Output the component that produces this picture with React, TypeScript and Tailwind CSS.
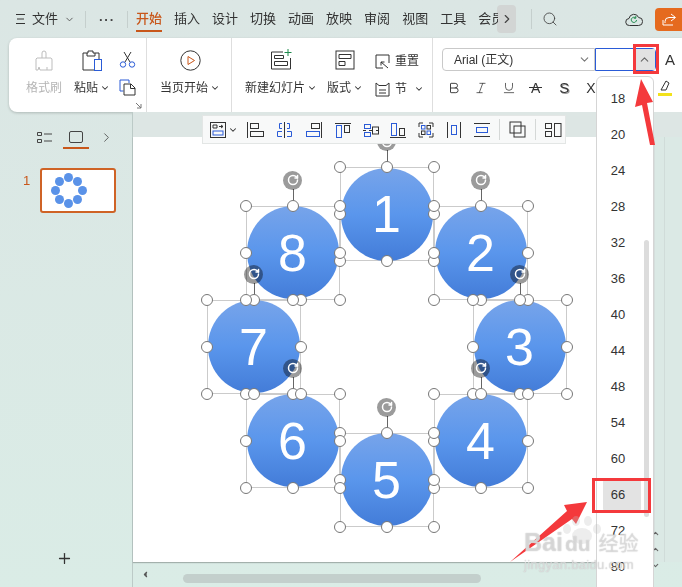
import React from 'react';
import { Bold, ChevronDown, ChevronLeft, ChevronRight, ChevronUp, Italic, Plus, RotateCw, Search, Underline } from 'lucide-react';

const cjk = "font-['Liberation_Sans','Noto_Sans_CJK_SC',sans-serif]";
const TABS = ['开始', '插入', '设计', '切换', '动画', '放映', '审阅', '视图', '工具', '会员'];
const SIZES = [18, 20, 24, 28, 32, 36, 40, 44, 48, 54, 60, 66, 72, 80];

// centres in page coordinates
const NODES = [
  { n: 1, x: 386.5, y: 214 },
  { n: 2, x: 480.5, y: 252.5 },
  { n: 3, x: 519.5, y: 346.5 },
  { n: 4, x: 480.5, y: 440.5 },
  { n: 5, x: 386.5, y: 479.5 },
  { n: 6, x: 292.5, y: 440.5 },
  { n: 7, x: 253.5, y: 346.5 },
  { n: 8, x: 292.5, y: 252.5 },
];
const CANVAS_X = 133;
const CANVAS_Y = 137;
const R = 47;

const THUMB = [
  [26, 7], [35, 11], [40, 20], [35, 29], [26, 33], [17, 29], [13, 20], [17, 11],
];

const Ico: React.FC<{ w?: number; h?: number; children: React.ReactNode; className?: string }> = ({ w = 16, h = 16, children, className }) => (
  <svg width={w} height={h} viewBox={`0 0 ${w} ${h}`} fill="none" stroke="#333" strokeWidth="1" className={className}>
    {children}
  </svg>
);

const BLUE = '#2a5bd7';

const ALIGN_ICONS: React.ReactNode[] = [
  <><path d="M1.5 0v16" /><rect x="4.5" y="1.5" width="8" height="5" /><rect x="4.5" y="9.5" width="13" height="5" /></>,
  <><path d="M8.5 0v16" /><path d="M6 1.5H3.5v5H6M11 1.5h2.5v5H11" stroke={BLUE} /><path d="M6 9.5H1.5v5H6M11 9.5h4.5v5H11" stroke={BLUE} /></>,
  <><path d="M16.5 0v16" /><rect x="6.5" y="1.5" width="8" height="5" /><rect x="1.5" y="9.5" width="13" height="5" stroke={BLUE} /></>,
  <><path d="M0 1.5h16" /><rect x="1.5" y="3.5" width="5" height="12" stroke={BLUE} /><rect x="9.5" y="3.5" width="5" height="7" /></>,
  <><path d="M0 8.5h3M6 8.5h4M13 8.5h3" /><rect x="1.5" y="2.5" width="6" height="4" stroke={BLUE} /><rect x="1.5" y="10.5" width="6" height="4" stroke={BLUE} /><rect x="9.5" y="5" width="6" height="7" /></>,
  <><path d="M0 15.5h16" /><rect x="1.5" y="1.5" width="5" height="12" stroke={BLUE} /><rect x="9.5" y="6.5" width="5" height="7" /></>,
  <><path d="M1 1h4M11 1h4M1 15h4M11 15h4M1 1v4M15 1v4M1 11v4M15 11v4" /><rect x="3.5" y="3.5" width="3.5" height="3.5" stroke={BLUE} /><rect x="9" y="3.5" width="3.5" height="3.5" /><rect x="3.5" y="9" width="3.5" height="3.5" /><rect x="9" y="9" width="3.5" height="3.5" stroke={BLUE} /></>,
  <><path d="M1.5 0v16M14.5 0v16" /><rect x="5.5" y="3.5" width="5" height="9" stroke={BLUE} /></>,
  <><path d="M0 1.5h16M0 14.5h16" /><rect x="2.5" y="5.5" width="11" height="5" stroke={BLUE} /></>,
];

const Node: React.FC<{ n: number; x: number; y: number }> = ({ n, x, y }) => (
  <div
    className="absolute flex h-[94px] w-[94px] items-center justify-center border border-[#cbcbcb]"
    style={{ left: x - R - CANVAS_X, top: y - R - CANVAS_Y }}
  >
    <div className="flex h-[93px] w-[93px] items-center justify-center rounded-full bg-gradient-to-b from-[#77a4ea] via-[#5a96ec] to-[#437cd8] font-['Liberation_Sans',sans-serif] text-[52px] leading-none text-white">
      {n}
    </div>
  </div>
);

const Rotate: React.FC<{ x: number; y: number }> = ({ x, y }) => (
  <>
    <div className="absolute w-px bg-[#666]" style={{ left: x - CANVAS_X, top: y - 64 - CANVAS_Y, height: 17 }} />
    <div
      className="absolute h-[19px] w-[19px] rounded-full bg-[#9b9b9b] mix-blend-multiply"
      style={{ left: x - 9.5 - CANVAS_X, top: y - 72.5 - 9.5 - CANVAS_Y }}
    />
    <div
      className="absolute flex h-[19px] w-[19px] items-center justify-center"
      style={{ left: x - 9.5 - CANVAS_X, top: y - 72.5 - 9.5 - CANVAS_Y }}
    >
      <RotateCw size={12} color="#fff" strokeWidth={3} />
    </div>
  </>
);

const Handle: React.FC<{ x: number; y: number }> = ({ x, y }) => (
  <div
    className="absolute h-[12px] w-[12px] rounded-full border border-[#777] bg-white"
    style={{ left: x - 6 - CANVAS_X, top: y - 6 - CANVAS_Y }}
  />
);

const Handles: React.FC<{ x: number; y: number }> = ({ x, y }) => (
  <>
    {[-R, 0, R].flatMap((dx) =>
      [-R, 0, R].filter((dy) => dx !== 0 || dy !== 0).map((dy) => <Handle key={`${dx}${dy}`} x={x + dx} y={y + dy} />),
    )}
  </>
);

const Caret: React.FC = () => <ChevronDown size={10} strokeWidth={2.5} className="ml-[2px] text-[#333]" />;

const TopBar: React.FC = () => (
  <div className={`flex h-[38px] items-center ${cjk} text-[13px] text-[#333]`}>
    <svg width="9" height="10" viewBox="0 0 9 10" stroke="#333" className="ml-4"><path d="M0 .5h9M1 5h7M0 9.5h9" /></svg>
    <span className="ml-[7px]">文件</span>
    <ChevronDown size={11} strokeWidth={2} className="ml-[6px] text-[#555]" />
    <div className="ml-[10px] h-[17px] w-px bg-[#c5cfcd]" />
    <span className="ml-[13px] text-[13px] font-bold leading-none tracking-[1px] text-[#444]">···</span>
    <div className="ml-[12px] h-[17px] w-px bg-[#c5cfcd]" />
    <div className="ml-[8px] flex w-[362px] gap-3 overflow-hidden">
      {TABS.map((t, i) => (
        <div key={t} className={`relative flex h-[38px] shrink-0 items-center pt-0 ${i === 0 ? 'font-medium text-[#c8571b]' : ''}`}>
          {t}
          {i === 0 && <div className="absolute bottom-[6px] left-0 h-[2px] w-full bg-[#c8571b]" />}
        </div>
      ))}
    </div>
    <div className="ml-[-1px] flex h-[28px] w-[19px] items-center justify-center rounded bg-[#d2d5d4]">
      <ChevronRight size={14} className="text-[#444]" />
    </div>
    <div className="ml-[15px] h-[20px] w-px bg-[#c5cfcd]" />
    <Search size={16} strokeWidth={1.3} className="ml-[10px] text-[#444]" />
    <svg width="18" height="15" viewBox="0 0 18 15" fill="none" className="ml-[67px]">
      <path d="M4.5 13.5a3.5 3.5 0 0 1-.5-7 5 5 0 0 1 9.6-1 4 4 0 0 1 0 8z" stroke="#333" />
      <path d="M11.5 8a2.6 2.6 0 1 1-.8-2M10.8 4v2.2H8.8" stroke="#1e8a4c" />
    </svg>
    <div className="ml-[12px] flex h-[23px] flex-1 items-center gap-1 rounded-l bg-[#e56a1e] pl-[7px] text-white">
      <svg width="15" height="13" viewBox="0 0 15 13" fill="none" stroke="#fff" className="shrink-0"><path d="M9 1l4.5 3.5L9 8M13 4.5H7a4 4 0 0 0-4 4V10M1 7v5h10" /></svg>
    </div>
  </div>
);

const Ribbon: React.FC = () => (
  <div className={`ml-[9px] flex h-[74px] rounded-l-lg bg-white shadow-[0_1px_3px_rgba(0,0,0,0.2)] ${cjk} text-[12px] text-[#333]`}>
    {/* clipboard */}
    <div className="relative flex w-[138px] border-r border-[#dedede]">
      <div className="flex w-[52px] flex-col items-center pl-[18px] pt-[12px] text-[#b5b5b5]">
        <svg width="20" height="22" viewBox="0 0 20 22" fill="none" stroke="#bdbdbd">
          <path d="M8 8V3a2 2 0 0 1 4 0v5M3 8h14a2 2 0 0 1 1 2v10H6l-1-3-1 3H2V9z" />
          <path d="M13 20v-3" />
        </svg>
        <span className="mt-[7px] whitespace-nowrap">格式刷</span>
      </div>
      <div className="ml-[13px] flex flex-col items-center pt-[12px]">
        <svg width="22" height="22" viewBox="0 0 22 22" fill="none" stroke="#333">
          <path d="M14 20H2V3h5V1h5v2h6v6" /><path d="M6 3v3h8V3" /><rect x="13.5" y="9.5" width="7" height="11" stroke={BLUE} />
        </svg>
        <span className="mt-[7px] flex items-center whitespace-nowrap">粘贴<Caret /></span>
      </div>
      <div className="ml-[9px] flex flex-col gap-[11px] pt-[13px]">
        <svg width="17" height="17" viewBox="0 0 17 17" fill="none">
          <path d="M5 1l6 10M12 1L6 11" stroke="#333" />
          <circle cx="4" cy="13.5" r="2.7" stroke={BLUE} /><circle cx="13" cy="13.5" r="2.7" stroke={BLUE} />
        </svg>
        <svg width="17" height="17" viewBox="0 0 17 17" fill="none">
          <path d="M4.5 12H1V1h9v3" stroke={BLUE} /><path d="M5 5h7l4 4v7H5z" stroke="#333" /><path d="M11.5 5v4.5H16" stroke="#333" />
        </svg>
      </div>
      <svg width="7" height="7" viewBox="0 0 7 7" fill="none" stroke="#777" className="absolute bottom-[3px] right-[4px]"><path d="M1 1l5 5M6 2v4H2" /></svg>
    </div>
    {/* slideshow */}
    <div className="flex w-[85px] flex-col items-center border-r border-[#dedede] pl-[2px] pt-[12px]">
      <svg width="21" height="21" viewBox="0 0 21 21" fill="none">
        <circle cx="10.5" cy="10.5" r="9.7" stroke="#333" /><path d="M8 6.5l6.5 4-6.5 4z" stroke="#c8571b" />
      </svg>
      <span className="mt-[8px] flex items-center whitespace-nowrap">当页开始<Caret /></span>
    </div>
    {/* slides */}
    <div className="flex w-[201px] border-r border-[#dedede]">
      <div className="ml-[13px] flex flex-col items-center pt-[11px]">
        <svg width="22" height="21" viewBox="0 0 22 21" fill="none" stroke="#333">
          <path d="M20.5 9v11H1.5V3H13" /><path d="M4.5 6.5h9v3h-9zM4.5 12.5h13v4h-13z" /><path d="M18 0v7M14.5 3.5h7" stroke="#1e8a4c" />
        </svg>
        <span className="mt-[9px] flex items-center whitespace-nowrap">新建幻灯片<Caret /></span>
      </div>
      <div className="ml-[10px] flex flex-col items-center pt-[12px]">
        <svg width="20" height="20" viewBox="0 0 20 20" fill="none" stroke="#333">
          <rect x="1" y="1" width="18" height="18" /><path d="M4 4.5h12v4H4zM4 11.5h6v4H4z" />
        </svg>
        <span className="mt-[9px] flex items-center whitespace-nowrap">版式<Caret /></span>
      </div>
      <div className="ml-[12px] flex flex-col gap-[10px] pt-[14px]">
        <div className="flex items-center gap-[5px]">
          <svg width="15" height="15" viewBox="0 0 15 15" fill="none" stroke="#333"><path d="M8 14H1V1h13v8" /><path d="M6 8l7 6M6 8h3.5M6 8v3.5" /></svg>
          重置
        </div>
        <div className="flex items-center gap-[5px]">
          <svg width="15" height="15" viewBox="0 0 15 15" fill="none" stroke="#333"><path d="M1 1l3 2.5h7L14 1M1 1v13h13V1M4 8h7M4 11h7" /></svg>
          节<Caret />
        </div>
      </div>
    </div>
    {/* font */}
    <div className="flex-1 pl-[9px] pt-[10px]">
      <div className="flex h-[23px] items-stretch">
        <div className="flex w-[153px] items-center justify-between rounded-l border border-[#c9c9c9] pl-[11px] pr-[3px] text-[#333]">
          Arial (正文)
          <ChevronDown size={13} className="text-[#777]" />
        </div>
        <div className="flex w-[61px] justify-end rounded-r border border-[#2a5bd7]">
          <div className="flex w-[21px] items-center justify-center bg-[#e2e2e2]">
            <ChevronUp size={13} className="text-[#666]" />
          </div>
        </div>
        <span className="ml-[9px] text-[15px] leading-[23px]">A</span>
      </div>
      <div className="mt-[5px] flex h-[24px] items-center text-[14px]">
        <Bold size={14} strokeWidth={1.6} className="ml-[5px]" />
        <Italic size={14} strokeWidth={1.3} className="ml-[13px]" />
        <Underline size={14} strokeWidth={1.3} className="ml-[14px]" />
        <span className="relative ml-[15px] font-['Liberation_Sans',sans-serif] text-[14px]">A<span className="absolute left-[-2px] right-[-2px] top-[9px] h-px bg-[#333]" /></span>
        <span className="ml-[19px] font-['Liberation_Sans',sans-serif] text-[15px] [text-shadow:1px_1px_0_#999]">S</span>
        <span className="ml-[17px] font-['Liberation_Sans',sans-serif] text-[14px]">X</span>
        <svg width="14" height="16" viewBox="0 0 14 16" fill="none" stroke="#333" className="ml-[62px]"><path d="M3 10l5-9 3 2-3 7z" /><path d="M0 13h14v3H0z" fill="#f2e21b" stroke="none" /></svg>
      </div>
    </div>
  </div>
);

const FloatBar: React.FC = () => (
  <div className="absolute left-[69px] top-[-22px] z-20 flex h-[29px] w-[364px] items-center border border-[#e3e6e5] bg-[#f8f9f9] pl-[7px]">
    <svg width="16" height="16" viewBox="0 0 16 16" fill="none" stroke="#333">
      <rect x=".5" y=".5" width="15" height="15" /><path d="M3 3h4v3H3zM9 4.5h4M11 3l2 1.5L11 6" /><rect x="3" y="9" width="10" height="4" stroke={BLUE} />
    </svg>
    <Caret />
    <div className="ml-[8px] flex gap-[11.7px]">
      {ALIGN_ICONS.map((ic, i) => (
        <Ico key={i} w={i === 1 || i === 0 || i === 2 ? 18 : 16}>{ic}</Ico>
      ))}
    </div>
    <div className="ml-[9px] h-[21px] w-px bg-[#d5d8d7]" />
    <Ico w={17} h={17} className="ml-[9px]">
      <rect x="1" y="1" width="11" height="11" /><rect x="5" y="5" width="11" height="11" />
    </Ico>
    <div className="ml-[9px] h-[21px] w-px bg-[#d5d8d7]" />
    <Ico w={17} h={16} className="ml-[9px]">
      <rect x=".5" y="1.5" width="6" height="5" /><rect x=".5" y="9.5" width="6" height="5" /><rect x="9.5" y="1.5" width="6.5" height="13" />
    </Ico>
  </div>
);

const SizeMenu: React.FC = () => (
  <div className={`absolute left-[596px] top-[76px] z-30 h-[530px] w-[58px] rounded-t-md border border-[#d5d5d5] bg-white ${cjk} text-[13px] text-[#333]`}>
    <div className="flex flex-col pt-[4px]">
      {SIZES.map((s) => (
        <div key={s} className="ml-[6px] flex h-[36px] w-[38px] items-center justify-center">
          <div className={`flex h-[34px] w-full items-center justify-center rounded pr-[8px] ${s === 66 ? 'bg-[#e3e3e3]' : ''}`}>{s}</div>
        </div>
      ))}
    </div>
    <div className="absolute right-[4px] top-[163px] h-[277px] w-[5px] rounded-full bg-[#dcdcdc]" />
  </div>
);

const Annotations: React.FC = () => (
  <>
    <div className="absolute left-[633px] top-[44px] z-40 h-[30px] w-[26px] border-[3px] border-[#f4393c]" />
    <div className="absolute left-[592px] top-[478px] z-40 h-[35px] w-[59px] border-[3px] border-[#f4393c]" />
    <svg width="682" height="587" viewBox="0 0 682 587" className="pointer-events-none absolute left-0 top-0 z-40">
      <path d="M641 79L653 102L647 103L655 145L650 145L642 105L635 107z" fill="#f4393c" />
      <path d="M587 502L564 505L567 511L510 562L572 519L576 524z" fill="#f4393c" />
    </svg>
  </>
);

const Watermark: React.FC = () => (
  <div className="pointer-events-none absolute left-[524px] top-[530px] z-50 font-['Liberation_Sans','Noto_Sans_CJK_SC',sans-serif] text-white/50 [text-shadow:0_0_1px_#aaa]">
    <svg width="44" height="30" viewBox="0 0 44 30" className="absolute left-[36px] top-[-14px]" fill="#c4c4c4" opacity=".3">
      <ellipse cx="22" cy="20" rx="10" ry="8" /><ellipse cx="7" cy="13" rx="4" ry="5" /><ellipse cx="16" cy="5" rx="4" ry="5" /><ellipse cx="28" cy="5" rx="4" ry="5" /><ellipse cx="37" cy="13" rx="4" ry="5" />
    </svg>
    <div className="relative flex items-baseline whitespace-nowrap text-[25px] font-bold leading-[25px]">
      Bai<span className="ml-[2px] text-[21px]">du</span><span className="ml-[8px] text-[20px] font-normal">经验</span>
    </div>
    <div className="whitespace-nowrap text-[13px] leading-[15px] tracking-[0.3px]">jingyan.baidu.com</div>
  </div>
);

const App: React.FC = () => (
  <div className="relative h-[587px] w-[682px] overflow-hidden bg-gradient-to-b from-[#dbe6e4] to-[#daece6]">
    <TopBar />
    <Ribbon />

    <div className="flex h-[475px]">
      {/* thumbnails */}
      <div className="flex w-[133px] shrink-0 flex-col border-r border-[#bccac7]">
        <div className="mt-[14px] flex h-[22px] items-center pl-[37px]">
          <svg width="15" height="13" viewBox="0 0 15 13" fill="none" stroke="#444"><path d="M.5 1.5h4v3h-4zM.5 8.5h4v3h-4zM7 3h8M7 10h8" /></svg>
          <div className="relative ml-[17px] flex h-[22px] items-center">
            <div className="h-[12px] w-[14px] rounded-[2px] border border-[#444]" />
            <div className="absolute bottom-[-1px] left-[-6px] h-[2px] w-[26px] bg-[#c8571b]" />
          </div>
          <ChevronRight size={15} strokeWidth={1.3} className="ml-[16px] text-[#444]" />
        </div>
        <div className="mt-[20px] flex items-start">
          <span className={`ml-[23px] mt-[4px] w-[17px] ${cjk} text-[13px] leading-[18px] text-[#c8571b]`}>1</span>
          <div className="relative h-[45px] w-[76px] rounded-[3px] border-2 border-[#cf6326] bg-white">
            {THUMB.map(([x, y], i) => (
              <div key={i} className="absolute h-[9px] w-[9px] rounded-full bg-[#5a92e8]" style={{ left: x - 4.5, top: y - 4.5 }} />
            ))}
          </div>
        </div>
        <div className="mt-auto flex h-[41px] justify-center pt-[4px]">
          <Plus size={17} strokeWidth={1.8} className="mr-[3px] text-[#333]" />
        </div>
      </div>

      {/* slide area */}
      <div className="flex min-w-0 flex-1 flex-col">
        <div className="h-[25px] shrink-0 bg-[#dde6e4]" />
        <div className="flex min-h-0 flex-1">
          <div className="relative flex-1 bg-gradient-to-r from-white from-[90%] to-[#eef2f1] shadow-[0_1px_1px_rgba(0,0,0,0.25)]">
            <FloatBar />
            {NODES.map((p) => <Node key={p.n} {...p} />)}
            {NODES.map((p) => <Rotate key={p.n} x={p.x} y={p.y} />)}
            {NODES.map((p) => <Handles key={p.n} x={p.x} y={p.y} />)}
          </div>
          <div className="relative w-[28px] shrink-0 border-l border-[#d5dedc] bg-[#dbe9e5]">
            <div className="absolute bottom-[-8px] left-[-4px] flex flex-col gap-[7px]">
              <ChevronUp size={9} strokeWidth={3} className="text-[#666]" />
              <ChevronUp size={9} strokeWidth={3} className="text-[#666]" />
              <ChevronDown size={9} strokeWidth={3} className="text-[#666]" />
            </div>
            <div className="absolute bottom-0 left-[9px] top-0 w-px bg-[#d0dcd9]" />
          </div>
        </div>
        <div className="flex h-[25px] shrink-0 items-center">
          <ChevronLeft size={9} fill="#555" strokeWidth={3} className="ml-[8px] text-[#555]" />
          <div className="ml-[33px] mt-[7px] h-[9px] w-[298px] rounded-full bg-[#c3cfcc]" />
        </div>
      </div>
    </div>

    <SizeMenu />
    <Annotations />
    <Watermark />
  </div>
);

export default App;
